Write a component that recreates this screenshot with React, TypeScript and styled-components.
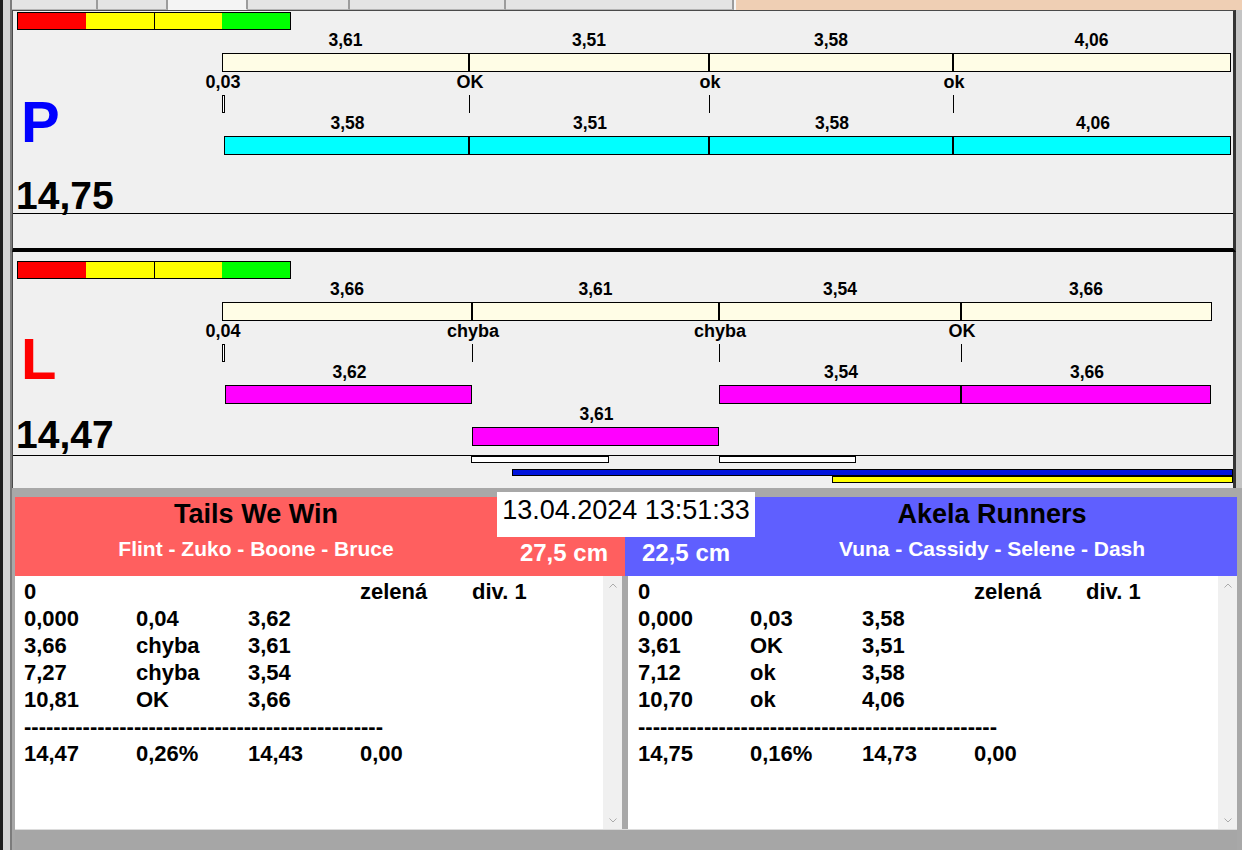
import React from "react";
import styled, { createGlobalStyle } from "styled-components";

// pixels per second on the timeline
const PX = 68.33;
const x = (t: number) => Math.round(t * PX);

interface Dog {
  start: number;
  end: number;
  lane: number;
  label: string;
}

interface Stripe {
  kind: "white" | "blue" | "yellow";
  start: number;
  end?: number;
}

interface Track {
  letter: string;
  letterColor: string;
  score: string;
  finish: number;
  marks: number[];
  splits: string[];
  statuses: string[];
  barColor: string;
  dogs: Dog[];
  lanes: number;
  stripes: Stripe[];
  first: boolean;
  letterTop: number;
  scoreGap: number;
}

const tracks: Track[] = [
  {
    letter: "P",
    letterColor: "#0000ff",
    score: "14,75",
    finish: 14.75,
    marks: [3.61, 7.12, 10.7],
    splits: ["3,61", "3,51", "3,58", "4,06"],
    statuses: ["0,03", "OK", "ok", "ok"],
    barColor: "#00ffff",
    dogs: [
      { start: 0.03, end: 3.61, lane: 0, label: "3,58" },
      { start: 3.61, end: 7.12, lane: 0, label: "3,51" },
      { start: 7.12, end: 10.7, lane: 0, label: "3,58" },
      { start: 10.7, end: 14.76, lane: 0, label: "4,06" },
    ],
    lanes: 1,
    stripes: [],
    first: true,
    letterTop: 63,
    scoreGap: 1,
  },
  {
    letter: "L",
    letterColor: "#ff0000",
    score: "14,47",
    finish: 14.47,
    marks: [3.66, 7.27, 10.81],
    splits: ["3,66", "3,61", "3,54", "3,66"],
    statuses: ["0,04", "chyba", "chyba", "OK"],
    barColor: "#ff00ff",
    dogs: [
      { start: 0.04, end: 3.66, lane: 0, label: "3,62" },
      { start: 3.66, end: 7.27, lane: 1, label: "3,61" },
      { start: 7.27, end: 10.81, lane: 0, label: "3,54" },
      { start: 10.81, end: 14.47, lane: 0, label: "3,66" },
    ],
    lanes: 2,
    stripes: [
      { kind: "white", start: 3.65, end: 5.66 },
      { kind: "white", start: 7.27, end: 9.28 },
      { kind: "blue", start: 4.245 },
      { kind: "yellow", start: 8.93 },
    ],
    first: false,
    letterTop: 51,
    scoreGap: 4,
  },
];

interface Team {
  name: string;
  members: string;
  cm: string;
  rows: string[][];
  totals: string[];
  pad: number;
}

const teams: Team[] = [
  {
    name: "Tails We Win",
    members: "Flint - Zuko - Boone - Bruce",
    cm: "27,5 cm",
    rows: [
      ["0", "", "", "zelená", "div. 1"],
      ["0,000", "0,04", "3,62"],
      ["3,66", "chyba", "3,61"],
      ["7,27", "chyba", "3,54"],
      ["10,81", "OK", "3,66"],
    ],
    totals: ["14,47", "0,26%", "14,43", "0,00"],
    pad: 9,
  },
  {
    name: "Akela Runners",
    members: "Vuna - Cassidy - Selene - Dash",
    cm: "22,5 cm",
    rows: [
      ["0", "", "", "zelená", "div. 1"],
      ["0,000", "0,03", "3,58"],
      ["3,61", "OK", "3,51"],
      ["7,12", "ok", "3,58"],
      ["10,70", "ok", "4,06"],
    ],
    totals: ["14,75", "0,16%", "14,73", "0,00"],
    pad: 10,
  },
];

const tabs = [86, 70, 80, 102, 156, 228];

const GlobalStyle = createGlobalStyle`
  html, body { margin: 0; padding: 0; }
  body {
    font-family: "Liberation Sans", Arial, sans-serif;
    background: #a8a8a8;
  }
  * { box-sizing: border-box; }
`;

const Arrow = ({ up }: { up?: boolean }) => (
  <svg width="8" height="5" viewBox="0 0 8 5">
    <polyline
      points={up ? "0.5,4.5 4,1 7.5,4.5" : "0.5,0.5 4,4 7.5,0.5"}
      fill="none"
      stroke="#ababab"
      strokeWidth="1"
    />
  </svg>
);

const TrackPanel: React.FC<{ track: Track }> = ({ track }) => {
  const bounds = [0, ...track.marks, track.finish];
  return (
    <Panel $first={track.first}>
      <ColorBar>
        <ColorCell $c="#ff0000" />
        <ColorCell $c="#ffff00" $sep />
        <ColorCell $c="#ffff00" />
        <ColorCell $c="#00ff00" />
      </ColorBar>
      <Section>
        <Side>
          <Letter $color={track.letterColor} $top={track.letterTop}>
            {track.letter}
          </Letter>
          <Score $gap={track.scoreGap}>{track.score}</Score>
        </Side>
        <Chart>
          <LabelRow>
            {track.splits.map((s, i) => (
              <Label
                key={i}
                style={{ left: (x(bounds[i]) + x(bounds[i + 1])) / 2 }}
              >
                {s}
              </Label>
            ))}
          </LabelRow>
          <RefBar style={{ width: x(track.finish) + 1 }}>
            {track.marks.map((m) => (
              <Divider key={m} style={{ left: x(m) - 2 }} />
            ))}
          </RefBar>
          <LabelRow>
            {track.statuses.map((s, i) => (
              <Label key={i} $status style={{ left: x(bounds[i]) + 1 }}>
                {s}
              </Label>
            ))}
          </LabelRow>
          <TickRow>
            <StartTick />
            {track.marks.map((m) => (
              <Tick key={m} style={{ left: x(m) }} />
            ))}
          </TickRow>
          {Array.from({ length: track.lanes }).map((_, lane) => {
            const dogs = track.dogs.filter((d) => d.lane === lane);
            return (
              <React.Fragment key={lane}>
                <LabelRow>
                  {dogs.map((d, i) => (
                    <Label
                      key={i}
                      style={{ left: (x(d.start) + x(d.end)) / 2 + 1 }}
                    >
                      {d.label}
                    </Label>
                  ))}
                </LabelRow>
                <BarRow>
                  {dogs.map((d, i) => (
                    <DogBar
                      key={i}
                      $c={track.barColor}
                      style={{ left: x(d.start), width: x(d.end) - x(d.start) }}
                    />
                  ))}
                </BarRow>
              </React.Fragment>
            );
          })}
        </Chart>
      </Section>
      <BottomBox $h={track.first ? 35 : 33}>
        <Lane>
          {track.stripes.map((s, i) => (
            <StripeBar
              key={i}
              $kind={s.kind}
              style={
                s.end !== undefined
                  ? { left: x(s.start), width: x(s.end) - x(s.start) }
                  : { left: x(s.start), right: 0 }
              }
            />
          ))}
        </Lane>
      </BottomBox>
    </Panel>
  );
};

const ResultList: React.FC<{ team: Team }> = ({ team }) => (
  <ListBox>
    <ListBody $pad={team.pad}>
      {team.rows.map((r, i) => (
        <ListRow key={i}>
          {r.map((c, j) => (
            <span key={j}>{c}</span>
          ))}
        </ListRow>
      ))}
      <ListRow>
        <Dashes>{"-".repeat(49)}</Dashes>
      </ListRow>
      <ListRow>
        {team.totals.map((c, j) => (
          <span key={j}>{c}</span>
        ))}
      </ListRow>
    </ListBody>
    <ScrollBar>
      <Arrow up />
      <Arrow />
    </ScrollBar>
  </ListBox>
);

const App: React.FC = () => {
  const [red, blue] = teams;
  return (
    <Screen>
      <GlobalStyle />
      <LeftEdge />
      <Main>
        <TabStrip>
          {tabs.map((w, i) => (
            <TabItem key={i} $w={w} $active={i === 2} />
          ))}
          <Peach />
        </TabStrip>
        <TrackArea>
          <Panels>
            {tracks.map((t) => (
              <TrackPanel key={t.letter} track={t} />
            ))}
          </Panels>
          <RightGutter />
        </TrackArea>
        <Lower>
          <Header>
            <Names $bg="#ff5f5f" $col={1}>
              <TeamName>{red.name}</TeamName>
              <Members>{red.members}</Members>
            </Names>
            <DateBox>13.04.2024 13:51:33</DateBox>
            <Cm $bg="#ff5f5f" $col={2} $right>
              {red.cm}
            </Cm>
            <Cm $bg="#5f5fff" $col={3}>
              {blue.cm}
            </Cm>
            <Names $bg="#5f5fff" $col={4} $shift={8}>
              <TeamName>{blue.name}</TeamName>
              <Members>{blue.members}</Members>
            </Names>
          </Header>
          <Lists>
            <ResultList team={red} />
            <ResultList team={blue} />
          </Lists>
          <BottomBand />
        </Lower>
      </Main>
    </Screen>
  );
};

export default App;

const Screen = styled.div`
  width: 1242px;
  height: 850px;
  display: flex;
  overflow: hidden;
  background: #a8a8a8;
`;

const LeftEdge = styled.div`
  width: 12px;
  flex: none;
  background: linear-gradient(
    to right,
    #1e1e1e 0 3px,
    #d4d4d4 3px 10px,
    #7c7c7c 10px 12px
  );
`;

const Main = styled.div`
  flex: 1;
  display: flex;
  flex-direction: column;
  min-width: 0;
`;

const TabStrip = styled.div`
  height: 10px;
  display: flex;
  background: #d8d8d8;
  flex: none;
`;

const TabItem = styled.div<{ $w: number; $active?: boolean }>`
  width: ${(p) => p.$w}px;
  background: ${(p) => (p.$active ? "#f4f4f4" : "#e4e4e4")};
  border-right: 2px solid #9c9c9c;
  border-bottom: 1px solid ${(p) => (p.$active ? "#f4f4f4" : "#b4b4b4")};
`;

const Peach = styled.div`
  flex: 1;
  background: #efcfb4;
  border-left: 2px solid #f6f6f6;
  height: 11px;
`;

const TrackArea = styled.div`
  display: flex;
  flex: none;
`;

const Panels = styled.div`
  width: 1224px;
  display: flex;
  flex-direction: column;
`;

const RightGutter = styled.div`
  flex: 1;
  background: #c4c4c4;
`;

const Panel = styled.div<{ $first: boolean }>`
  height: ${(p) => (p.$first ? 242 : 236)}px;
  display: flex;
  flex-direction: column;
  background: #f0f0f0;
  border-left: 1px solid #4a4a4a;
  border-right: 3px solid #343434;
  border-top: ${(p) => (p.$first ? "1px solid #4a4a4a" : "none")};
  border-bottom: ${(p) => (p.$first ? "4px solid #000" : "none")};
  padding-top: ${(p) => (p.$first ? 1 : 9)}px;
`;

const ColorBar = styled.div`
  display: flex;
  width: 274px;
  height: 18px;
  margin-left: 4px;
  border: 1px solid #000;
  flex: none;
`;

const ColorCell = styled.div<{ $c: string; $sep?: boolean }>`
  flex: 1;
  background: ${(p) => p.$c};
  border-right: ${(p) => (p.$sep ? "1px solid #000" : "none")};
`;

const Section = styled.div`
  flex: 1;
  display: flex;
  min-height: 0;
`;

const Side = styled.div`
  width: 209px;
  flex: none;
  display: flex;
  flex-direction: column;
  justify-content: space-between;
`;

const Letter = styled.div<{ $color: string; $top: number }>`
  margin-top: ${(p) => p.$top}px;
  margin-left: 8px;
  font-size: 58px;
  line-height: 58px;
  font-weight: 700;
  color: ${(p) => p.$color};
`;

const Score = styled.div<{ $gap: number }>`
  margin: 0 0 ${(p) => p.$gap}px 3px;
  font-size: 39px;
  line-height: 32px;
  font-weight: 700;
  color: #000;
`;

const Chart = styled.div`
  flex: 1;
  display: flex;
  flex-direction: column;
`;

const LabelRow = styled.div`
  position: relative;
  height: 23px;
  flex: none;
`;

const Label = styled.span<{ $status?: boolean }>`
  position: absolute;
  top: 0;
  transform: translateX(-50%);
  font-size: ${(p) => (p.$status ? 18 : 17.5)}px;
  line-height: 20px;
  font-weight: 700;
  color: #000;
  white-space: nowrap;
`;

const RefBar = styled.div`
  position: relative;
  height: 19px;
  flex: none;
  background: #fffde6;
  border: 1px solid #000;
`;

const Divider = styled.div`
  position: absolute;
  top: 0;
  bottom: 0;
  width: 2px;
  background: #000;
`;

const TickRow = styled.div`
  position: relative;
  height: 18px;
  flex: none;
`;

const Tick = styled.div`
  position: absolute;
  top: 0;
  bottom: 0;
  width: 1px;
  background: #000;
`;

const StartTick = styled.div`
  position: absolute;
  top: 0;
  bottom: 0;
  left: 0;
  width: 3px;
  background: #fff;
  border: 1px solid #000;
`;

const BarRow = styled.div`
  position: relative;
  height: 19px;
  flex: none;
`;

const DogBar = styled.div<{ $c: string }>`
  position: absolute;
  top: 0;
  height: 19px;
  background: ${(p) => p.$c};
  border: 1px solid #000;
`;

const BottomBox = styled.div<{ $h: number }>`
  height: ${(p) => p.$h}px;
  flex: none;
  display: flex;
  border-top: 1px solid #000;
`;

const Lane = styled.div`
  position: relative;
  flex: 1;
  margin-left: 209px;
`;

const stripeLook = {
  white: { top: 0, bg: "#ffffff" },
  blue: { top: 13, bg: "#0014dc" },
  yellow: { top: 20, bg: "#ffff00" },
};

const StripeBar = styled.div<{ $kind: Stripe["kind"] }>`
  position: absolute;
  top: ${(p) => stripeLook[p.$kind].top}px;
  height: 7px;
  background: ${(p) => stripeLook[p.$kind].bg};
  border: 1px solid #000;
`;

const Lower = styled.div`
  flex: 1;
  display: flex;
  flex-direction: column;
  padding: 9px 5px 0 3px;
  background: #a8a8a8;
`;

const Header = styled.div`
  display: grid;
  grid-template-columns: 482px 128px 130px 482px;
  grid-template-rows: 40px 39px;
  flex: none;
`;

const Names = styled.div<{ $bg: string; $col: number; $shift?: number }>`
  grid-column: ${(p) => p.$col};
  grid-row: 1 / 3;
  background: ${(p) => p.$bg};
  display: flex;
  flex-direction: column;
  align-items: center;
  padding: 2px ${(p) => p.$shift ?? 0}px 0 0;
`;

const TeamName = styled.div`
  font-size: 27px;
  line-height: 30px;
  font-weight: 700;
  color: #000;
`;

const Members = styled.div`
  margin-top: 8px;
  font-size: 21px;
  line-height: 24px;
  font-weight: 700;
  color: #fff;
`;

const DateBox = styled.div`
  grid-column: 2 / 4;
  grid-row: 1;
  margin-top: -5px;
  height: 45px;
  background: #fff;
  text-align: center;
  font-size: 27px;
  line-height: 36px;
  color: #000;
  white-space: nowrap;
`;

const Cm = styled.div<{ $bg: string; $col: number; $right?: boolean }>`
  grid-column: ${(p) => p.$col};
  grid-row: 2;
  background: ${(p) => p.$bg};
  text-align: ${(p) => (p.$right ? "right" : "left")};
  padding: 2px 17px 0;
  font-size: 24px;
  line-height: 28px;
  font-weight: 700;
  color: #fff;
  white-space: nowrap;
`;

const Lists = styled.div`
  display: grid;
  grid-template-columns: 607px 609px;
  gap: 6px;
  height: 253px;
  flex: none;
`;

const ListBox = styled.div`
  display: flex;
  background: #fff;
`;

const ListBody = styled.div<{ $pad: number }>`
  flex: 1;
  padding: 2px 0 0 ${(p) => p.$pad}px;
`;

const ListRow = styled.div`
  display: grid;
  grid-template-columns: repeat(5, 112px);
  height: 27px;
  font-size: 22px;
  line-height: 27px;
  font-weight: 700;
  color: #000;
  white-space: nowrap;
`;

const Dashes = styled.span`
  grid-column: 1 / -1;
`;

const ScrollBar = styled.div`
  width: 19px;
  flex: none;
  background: #f0f0f0;
  display: flex;
  flex-direction: column;
  justify-content: space-between;
  align-items: center;
  padding: 7px 0 6px;
`;

const BottomBand = styled.div`
  flex: 1;
  border-top: 1px solid #dcdcdc;
  background: #a6a6a6;
`;
